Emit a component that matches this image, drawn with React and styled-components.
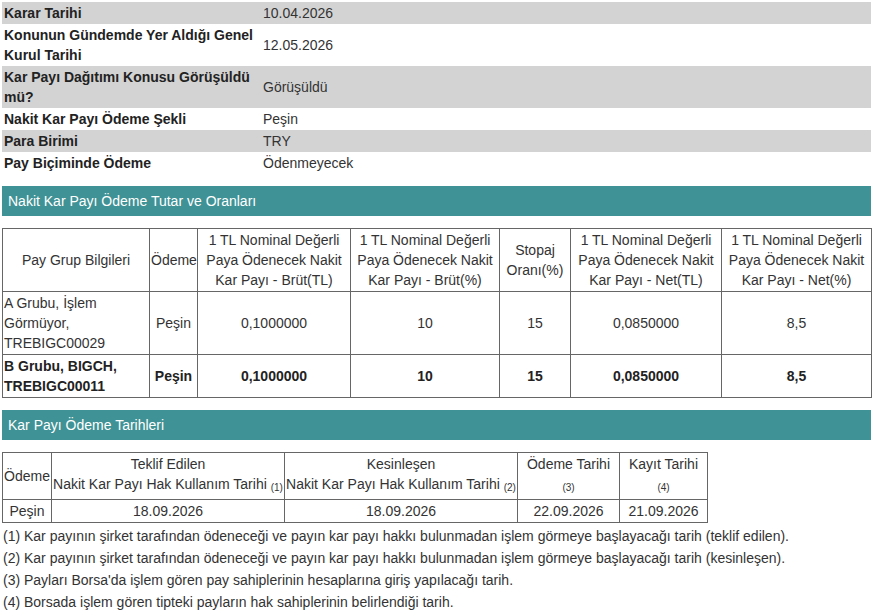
import React from 'react';
import styled, { createGlobalStyle } from 'styled-components';

const GlobalStyle = createGlobalStyle`
  body {
    margin: 0;
    background: #fff;
    font-family: 'Liberation Sans', Arial, sans-serif;
    font-size: 14px;
    color: #333;
  }
`;

const info = [
  ['Karar Tarihi', '10.04.2026'],
  ['Konunun Gündemde Yer Aldığı Genel Kurul Tarihi', '12.05.2026'],
  ['Kar Payı Dağıtımı Konusu Görüşüldü mü?', 'Görüşüldü'],
  ['Nakit Kar Payı Ödeme Şekli', 'Peşin'],
  ['Para Birimi', 'TRY'],
  ['Pay Biçiminde Ödeme', 'Ödenmeyecek'],
];

const amountHeaders = [
  'Pay Grup Bilgileri',
  'Ödeme',
  '1 TL Nominal Değerli Paya Ödenecek Nakit Kar Payı - Brüt(TL)',
  '1 TL Nominal Değerli Paya Ödenecek Nakit Kar Payı - Brüt(%)',
  'Stopaj Oranı(%)',
  '1 TL Nominal Değerli Paya Ödenecek Nakit Kar Payı - Net(TL)',
  '1 TL Nominal Değerli Paya Ödenecek Nakit Kar Payı - Net(%)',
];

const amountRows = [
  { group: 'A Grubu, İşlem Görmüyor, TREBIGC00029', cells: ['Peşin', '0,1000000', '10', '15', '0,0850000', '8,5'] },
  { group: 'B Grubu, BIGCH, TREBIGC00011', cells: ['Peşin', '0,1000000', '10', '15', '0,0850000', '8,5'], bold: true },
];

const notes = [
  '(1) Kar payının şirket tarafından ödeneceği ve payın kar payı hakkı bulunmadan işlem görmeye başlayacağı tarih (teklif edilen).',
  '(2) Kar payının şirket tarafından ödeneceği ve payın kar payı hakkı bulunmadan işlem görmeye başlayacağı tarih (kesinleşen).',
  "(3) Payları Borsa'da işlem gören pay sahiplerinin hesaplarına giriş yapılacağı tarih.",
  '(4) Borsada işlem gören tipteki payların hak sahiplerinin belirlendiği tarih.',
];

function App() {
  return (
    <Page>
      <GlobalStyle />
      <InfoTable>
        <colgroup>
          <col style={{ width: 259 }} />
          <col />
        </colgroup>
        <tbody>
          {info.map(([label, value], i) => (
            <InfoRow key={label} $shaded={i % 2 === 0}>
              <InfoLabel>{label}</InfoLabel>
              <InfoValue>{value}</InfoValue>
            </InfoRow>
          ))}
        </tbody>
      </InfoTable>

      <SectionTitle>Nakit Kar Payı Ödeme Tutar ve Oranları</SectionTitle>

      <GridTable $width="869px">
        <colgroup>
          {[147, 48, 153, 149, 71, 151, 150].map((w, i) => (
            <col key={i} style={{ width: w }} />
          ))}
        </colgroup>
        <tbody>
          <tr>
            {amountHeaders.map((h) => (
              <Cell key={h}>{h}</Cell>
            ))}
          </tr>
          {amountRows.map((row) => (
            <tr key={row.group}>
              <Cell $left $bold={row.bold}>{row.group}</Cell>
              {row.cells.map((c, i) => (
                <Cell key={i} $bold={row.bold}>{c}</Cell>
              ))}
            </tr>
          ))}
        </tbody>
      </GridTable>

      <SectionTitle>Kar Payı Ödeme Tarihleri</SectionTitle>

      <GridTable $width="705px">
        <colgroup>
          {[49, 233, 233, 102, 88].map((w, i) => (
            <col key={i} style={{ width: w }} />
          ))}
        </colgroup>
        <tbody>
          <tr>
            <Cell>Ödeme</Cell>
            <Cell>
              Teklif Edilen
              <br />
              Nakit Kar Payı Hak Kullanım Tarihi <Ref>(1)</Ref>
            </Cell>
            <Cell>
              Kesinleşen
              <br />
              Nakit Kar Payı Hak Kullanım Tarihi <Ref>(2)</Ref>
            </Cell>
            <Cell>
              Ödeme Tarihi <Ref>(3)</Ref>
            </Cell>
            <Cell>
              Kayıt Tarihi <Ref>(4)</Ref>
            </Cell>
          </tr>
          <tr>
            <Cell>Peşin</Cell>
            <Cell>18.09.2026</Cell>
            <Cell>18.09.2026</Cell>
            <Cell>22.09.2026</Cell>
            <Cell>21.09.2026</Cell>
          </tr>
        </tbody>
      </GridTable>

      <Notes>
        {notes.map((n) => (
          <Note key={n}>{n}</Note>
        ))}
      </Notes>
    </Page>
  );
}

const Page = styled.div`
  padding: 2px;
  width: 869px;
`;

const InfoTable = styled.table`
  width: 100%;
  border-collapse: collapse;
  table-layout: fixed;
`;

const InfoRow = styled.tr`
  background: ${(p) => (p.$shaded ? '#d3d3d3' : '#fff')};
`;

const InfoLabel = styled.td`
  padding: 1px 2px;
  line-height: 20px;
  font-weight: bold;
  color: #222;
  vertical-align: middle;
`;

const InfoValue = styled.td`
  padding: 1px 2px;
  line-height: 20px;
  color: #333;
  vertical-align: middle;
`;

const SectionTitle = styled.div`
  margin: 12px 0;
  height: 30px;
  line-height: 30px;
  padding-left: 6px;
  background: #3f9295;
  color: #fff;
  font-size: 14px;
`;

const GridTable = styled.table`
  width: ${(p) => p.$width};
  border-collapse: collapse;
  table-layout: fixed;
`;

const Cell = styled.td`
  border: 1px solid #666;
  padding: 1px;
  line-height: 20px;
  text-align: ${(p) => (p.$left ? 'left' : 'center')};
  font-weight: ${(p) => (p.$bold ? 'bold' : 'normal')};
  color: ${(p) => (p.$bold ? '#222' : '#333')};
  vertical-align: middle;
`;

const Ref = styled.span`
  font-size: 10px;
  vertical-align: -2px;
`;

const Notes = styled.div`
  margin-top: 2px;
`;

const Note = styled.div`
  line-height: 22px;
  padding-left: 1px;
  color: #333;
`;

export default App;
